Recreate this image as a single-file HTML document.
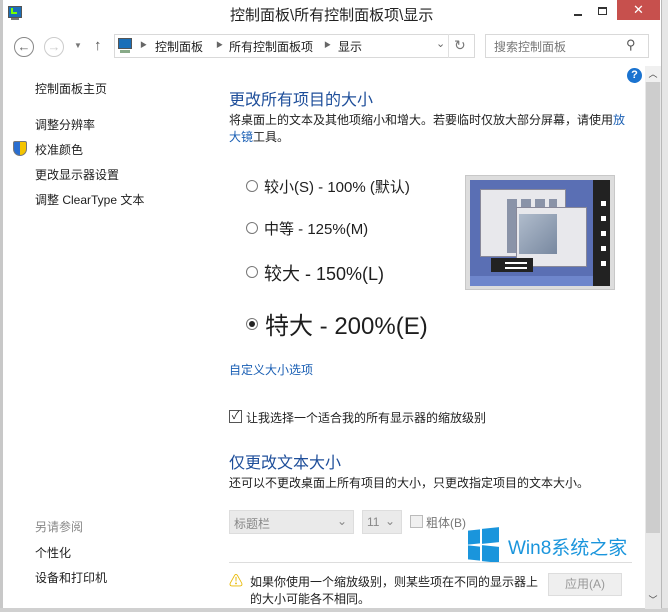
<!DOCTYPE html>
<html><head><meta charset="utf-8"><style>
*{margin:0;padding:0;box-sizing:border-box}
body{width:668px;height:612px;overflow:hidden;background:#fff;font-family:"Liberation Sans","Noto Sans CJK SC",sans-serif;color:#1e1e1e;position:relative;font-size:12px}
.a{position:absolute;white-space:nowrap}
.lnk{color:#1a5fb4}
.blue{color:#1e4e9a}
</style></head><body>
<div class="a" style="left:0;top:0;width:668px;height:612px;border:1px solid #a0a0a0;border-top:none"></div>
<div class="a" style="left:0;top:0;width:3px;height:612px;background:#c8c8c8"></div>
<div class="a" style="left:661px;top:0;width:7px;height:612px;background:#e6e6e6;border-left:1px solid #b8b8b8"></div>
<div class="a" style="left:0;top:608px;width:668px;height:4px;background:#d0d0d0"></div>
<div class="a" style="left:8px;top:6px;width:14px;height:12px;background:#1a6fb8;border:1px solid #555"></div>
<div class="a" style="left:11px;top:8px;width:6px;height:6px;border-left:2px solid #7f0;border-bottom:2px solid #7f0"></div>
<div class="a" style="left:11px;top:18px;width:8px;height:2px;background:#777"></div>
<div class="a" style="left:230px;top:4px;font-size:15px;color:#222">控制面板\所有控制面板项\显示</div>
<div class="a" style="left:574px;top:14px;width:8px;height:2px;background:#333"></div>
<div class="a" style="left:598px;top:7px;width:9px;height:8px;border:1px solid #333;border-top-width:2px"></div>
<div class="a" style="left:617px;top:0;width:43px;height:20px;background:#c7504d;color:#fff;text-align:center;font-size:13px;line-height:20px">✕</div>
<div class="a" style="left:14px;top:37px;width:20px;height:20px;border:1.5px solid #888;border-radius:50%;text-align:center;line-height:17px;color:#666;font-size:13px">←</div>
<div class="a" style="left:44px;top:37px;width:20px;height:20px;border:1.5px solid #ccc;border-radius:50%;text-align:center;line-height:17px;color:#ccc;font-size:13px">→</div>
<div class="a" style="left:74px;top:41px;color:#777;font-size:8px">▼</div>
<div class="a" style="left:94px;top:37px;color:#555;font-size:15px">↑</div>
<div class="a" style="left:114px;top:34px;width:361px;height:24px;border:1px solid #d9d9d9"></div>
<div class="a" style="left:118px;top:38px;width:14px;height:11px;background:#1a6fb8;border:1px solid #555"></div>
<div class="a" style="left:120px;top:50px;width:10px;height:3px;background:#8a8"></div>
<div class="a" style="left:140px;top:40px;color:#666;font-size:7px">▶</div>
<div class="a" style="left:155px;top:38px">控制面板</div>
<div class="a" style="left:216px;top:40px;color:#666;font-size:7px">▶</div>
<div class="a" style="left:229px;top:38px">所有控制面板项</div>
<div class="a" style="left:324px;top:40px;color:#666;font-size:7px">▶</div>
<div class="a" style="left:338px;top:38px">显示</div>
<div class="a" style="left:436px;top:37px;color:#666;font-size:11px">⌄</div>
<div class="a" style="left:448px;top:34px;width:1px;height:24px;background:#e0e0e0"></div>
<div class="a" style="left:454px;top:37px;color:#777;font-size:14px">↻</div>
<div class="a" style="left:485px;top:34px;width:164px;height:24px;border:1px solid #d9d9d9"></div>
<div class="a" style="left:494px;top:38px;color:#777">搜索控制面板</div>
<div class="a" style="left:626px;top:37px;color:#555;font-size:13px">⚲</div>
<div class="a" style="left:645px;top:66px;width:16px;height:543px;background:#e8e8e8"></div>
<div class="a" style="left:645px;top:66px;width:16px;height:16px;background:#f0f0f0;text-align:center;font-size:9px;line-height:16px;color:#444">︿</div>
<div class="a" style="left:646px;top:82px;width:14px;height:451px;background:#cdcdcd"></div>
<div class="a" style="left:645px;top:592px;width:16px;height:16px;text-align:center;font-size:9px;line-height:16px;color:#444">﹀</div>
<div class="a" style="left:627px;top:68px;width:15px;height:15px;border-radius:50%;background:#1a73d0;color:#fff;font-weight:bold;font-size:11px;text-align:center;line-height:15px">?</div>
<div class="a" style="left:35px;top:80px">控制面板主页</div>
<div class="a" style="left:35px;top:116px">调整分辨率</div>
<div class="a" style="left:13px;top:141px;width:14px;height:15px;background:linear-gradient(90deg,#2a6ed0 50%,#f4c400 50%);border-radius:2px 2px 7px 7px;border:1px solid #777"></div>
<div class="a" style="left:35px;top:141px">校准颜色</div>
<div class="a" style="left:35px;top:166px">更改显示器设置</div>
<div class="a" style="left:35px;top:191px">调整 ClearType 文本</div>
<div class="a" style="left:35px;top:518px;color:#888">另请参阅</div>
<div class="a" style="left:35px;top:544px">个性化</div>
<div class="a" style="left:35px;top:569px">设备和打印机</div>
<div class="a blue" style="left:229px;top:86px;font-size:16px">更改所有项目的大小</div>
<div class="a" style="left:229px;top:111px">将桌面上的文本及其他项缩小和增大。若要临时仅放大部分屏幕，请使用<span class="lnk">放</span></div>
<div class="a" style="left:229px;top:128px"><span class="lnk">大镜</span>工具。</div>
<div class="a" style="left:246px;top:180px;width:12px;height:12px;border:1px solid #777;border-radius:50%"></div>
<div class="a" style="left:264px;top:176px;font-size:15px">较小(S) - 100% (默认)</div>
<div class="a" style="left:246px;top:222px;width:12px;height:12px;border:1px solid #777;border-radius:50%"></div>
<div class="a" style="left:264px;top:218px;font-size:15px">中等 - 125%(M)</div>
<div class="a" style="left:246px;top:266px;width:12px;height:12px;border:1px solid #777;border-radius:50%"></div>
<div class="a" style="left:264px;top:260px;font-size:18px">较大 - 150%(L)</div>
<div class="a" style="left:246px;top:318px;width:12px;height:12px;border:1px solid #777;border-radius:50%"><div style="margin:2px;width:6px;height:6px;border-radius:50%;background:#222"></div></div>
<div class="a" style="left:265px;top:306px;font-size:24px">特大 - 200%(E)</div>
<div class="a" style="left:465px;top:175px;width:150px;height:115px;background:#ddd;border:1px solid #c8c8c8"></div>
<div class="a" style="left:470px;top:180px;width:140px;height:106px;background:#5a6fb4"></div>
<div class="a" style="left:470px;top:276px;width:124px;height:10px;background:#6e86cc"></div>
<div class="a" style="left:593px;top:180px;width:17px;height:106px;background:#222"></div>
<div class="a" style="left:601px;top:201px;width:5px;height:5px;background:#fff;box-shadow:0 15px 0 #fff,0 30px 0 #fff,0 45px 0 #fff,0 60px 0 #fff"></div>
<div class="a" style="left:480px;top:189px;width:86px;height:68px;background:#e8e8ec;border:1px solid #889"></div>
<div class="a" style="left:507px;top:199px;width:50px;height:54px;background:repeating-linear-gradient(90deg,#8a93a8 0 10px,#e8e8ec 10px 14px)"></div>
<div class="a" style="left:516px;top:207px;width:71px;height:60px;background:#e8e8ec;border:1px solid #889"></div>
<div class="a" style="left:519px;top:214px;width:38px;height:40px;background:linear-gradient(135deg,#b0bccc,#7888a0)"></div>
<div class="a" style="left:491px;top:258px;width:42px;height:14px;background:#222"></div>
<div class="a" style="left:505px;top:262px;width:22px;height:2px;background:#fff;box-shadow:0 5px 0 #fff"></div>
<div class="a lnk" style="left:229px;top:361px">自定义大小选项</div>
<div class="a" style="left:229px;top:410px;width:13px;height:13px;border:1px solid #555;font-size:11px;line-height:11px;text-align:center">✓</div>
<div class="a" style="left:246px;top:409px">让我选择一个适合我的所有显示器的缩放级别</div>
<div class="a blue" style="left:229px;top:449px;font-size:16px">仅更改文本大小</div>
<div class="a" style="left:229px;top:474px">还可以不更改桌面上所有项目的大小，只更改指定项目的文本大小。</div>
<div class="a" style="left:229px;top:510px;width:125px;height:24px;background:#eaeaea;border:1px solid #ddd;color:#888;padding:4px 4px">标题栏<span style="position:absolute;right:6px;top:3px">⌄</span></div>
<div class="a" style="left:362px;top:510px;width:40px;height:24px;background:#eaeaea;border:1px solid #ddd;color:#888;padding:4px 4px">11<span style="position:absolute;right:6px;top:3px">⌄</span></div>
<div class="a" style="left:410px;top:515px;width:13px;height:13px;border:1px solid #bbb;background:#f0f0f0"></div>
<div class="a" style="left:426px;top:514px;color:#777">粗体(B)</div>
<div class="a" style="left:468px;top:530px;width:12px;height:14px;background:#1a95dc;transform:skewY(-6deg)"></div>
<div class="a" style="left:482px;top:528px;width:17px;height:15px;background:#1a95dc;transform:skewY(-6deg)"></div>
<div class="a" style="left:468px;top:546px;width:12px;height:14px;background:#1a95dc;transform:skewY(6deg)"></div>
<div class="a" style="left:482px;top:546px;width:17px;height:16px;background:#1a95dc;transform:skewY(6deg)"></div>
<div class="a" style="left:508px;top:533px;font-size:19px;color:#1a95dc">Win8系统之家</div>
<div class="a" style="left:229px;top:562px;width:403px;height:1px;background:#ddd"></div>
<div class="a" style="left:229px;top:571px;color:#e8b800;font-size:14px">⚠</div>
<div class="a" style="left:250px;top:573px">如果你使用一个缩放级别，则某些项在不同的显示器上</div>
<div class="a" style="left:250px;top:590px">的大小可能各不相同。</div>
<div class="a" style="left:548px;top:573px;width:74px;height:23px;background:#efefef;border:1px solid #ddd;color:#999;text-align:center;line-height:21px">应用(A)</div>
</body></html>
